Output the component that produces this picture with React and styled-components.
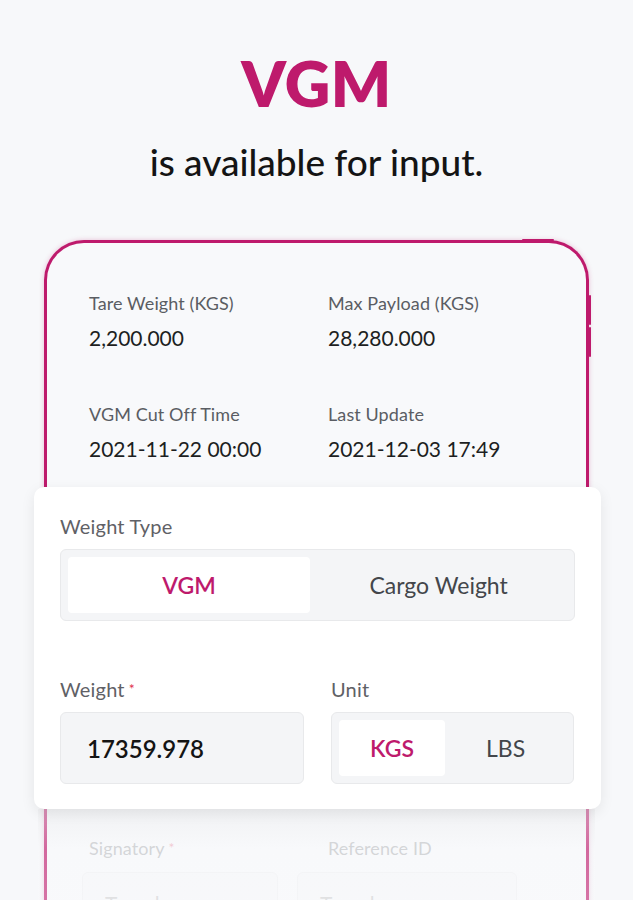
import styled, { createGlobalStyle } from "styled-components";

const magenta = "#be1a6c";

const GlobalStyle = createGlobalStyle`
  html, body {
    margin: 0;
    padding: 0;
    background: #f7f8fa;
  }
  body {
    font-family: Lato, "Open Sans", sans-serif;
    overflow: hidden;
  }
`;

const Page = styled.div`
  height: 900px;
  overflow: hidden;
  display: flex;
  flex-direction: column;
  align-items: center;
  padding-top: 48px;
  box-sizing: border-box;
`;

const Title = styled.h1`
  margin: 0;
  color: ${magenta};
  font-size: 63px;
  font-weight: 800;
  line-height: 70px;
  letter-spacing: 0.5px;
`;

const Subtitle = styled.p`
  margin: 22px 0 0;
  color: #141414;
  font-size: 37px;
  font-weight: 500;
  line-height: 44px;
`;

const Stage = styled.div`
  position: relative;
  width: 545px;
  margin-top: 56px;
  align-self: flex-start;
  margin-left: 44px;
`;

const Phone = styled.div`
  position: relative;
  height: 700px;
  border: 3px solid ${magenta};
  border-bottom: none;
  border-radius: 40px 40px 0 0;
  background: #f8f9fb;
  box-shadow: 0 0 5px rgba(190, 26, 108, 0.25);
  padding: 50px 42px 0;
  box-sizing: border-box;
`;

const SideButton = styled.span`
  position: absolute;
  right: -5px;
  top: ${(p) => p.$top}px;
  width: 2px;
  height: ${(p) => p.$h}px;
  background: ${magenta};
  border-radius: 1px;
`;

const TopBump = styled.span`
  position: absolute;
  top: -4px;
  right: 32px;
  width: 32px;
  height: 2px;
  background: ${magenta};
  border-radius: 1px;
`;

const InfoGrid = styled.div`
  display: grid;
  grid-template-columns: 239px 1fr;
  row-gap: 54px;
`;

const Info = styled.div`
  display: flex;
  flex-direction: column;
  gap: 13px;
`;

const InfoLabel = styled.span`
  font-size: 18px;
  letter-spacing: 0.1px;
  color: #5a5d63;
  line-height: 20px;
`;

const InfoValue = styled.span`
  font-size: 21px;
  color: #1d1f22;
  line-height: 24px;
`;

const LowerGrid = styled.div`
  display: grid;
  grid-template-columns: 239px 1fr;
  margin-top: 377px;
  opacity: 0.35;
`;

const LowerField = styled.div`
  display: flex;
  flex-direction: column;
  gap: 14px;
`;

const Placeholder = styled.div`
  width: ${(p) => p.$w}px;
  height: 60px;
  margin-left: ${(p) => p.$shift}px;
  border: 1px solid #e2e3e6;
  border-radius: 6px;
  background: #f5f6f8;
  box-sizing: border-box;
  padding: 18px 22px;
  font-size: 21px;
  color: #888;
`;

const Fade = styled.div`
  position: absolute;
  left: -6px;
  right: -6px;
  top: 569px;
  bottom: -10px;
  background: linear-gradient(
    to bottom,
    rgba(235, 236, 238, 0.55),
    rgba(248, 249, 251, 0.35) 40px,
    rgba(250, 250, 252, 0.45)
  );
`;

const Card = styled.div`
  position: absolute;
  left: -10px;
  top: 247px;
  width: 567px;
  height: 322px;
  box-sizing: border-box;
  background: #fff;
  border-radius: 10px;
  box-shadow: 0 4px 14px rgba(0, 0, 0, 0.08);
  padding: 28px 26px 0;
  display: flex;
  flex-direction: column;
`;

const FieldLabel = styled.div`
  font-size: 20px;
  letter-spacing: 0.2px;
  color: #5f6166;
  line-height: 22px;
  margin-bottom: 12px;
`;

const Required = styled.span`
  color: #e0304e;
  font-size: 14px;
  margin-left: 4px;
  vertical-align: top;
`;

const Segmented = styled.div`
  display: flex;
  height: 72px;
  padding: 7px;
  box-sizing: border-box;
  border: 1px solid #e8e9eb;
  border-radius: 6px;
  background: #f4f5f7;
`;

const Segment = styled.div`
  flex: ${(p) => p.$flex || 1};
  display: flex;
  align-items: center;
  justify-content: center;
  border-radius: 4px;
  background: ${(p) => (p.$active ? "#fff" : "transparent")};
  color: ${(p) => (p.$active ? magenta : "#43464b")};
  font-size: 23px;
  font-weight: ${(p) => (p.$active ? 600 : 400)};
`;

const Row = styled.div`
  display: grid;
  grid-template-columns: 244px 243px;
  column-gap: 27px;
  margin-top: 57px;
`;

const Field = styled.div`
  display: flex;
  flex-direction: column;
`;

const InputBox = styled.div`
  height: 72px;
  border: 1px solid #e8e9eb;
  border-radius: 6px;
  background: #f4f5f7;
  box-sizing: border-box;
  display: flex;
  align-items: center;
  padding-left: 26px;
  font-size: 24px;
  font-weight: 600;
  color: #141414;
`;

export default function App() {
  return (
    <>
      <GlobalStyle />
      <Page>
        <Title>VGM</Title>
        <Subtitle>is available for input.</Subtitle>
        <Stage>
          <Phone>
            <TopBump />
            <SideButton $top={52} $h={30} />
            <SideButton $top={84} $h={30} />
            <InfoGrid>
              <Info>
                <InfoLabel>Tare Weight (KGS)</InfoLabel>
                <InfoValue>2,200.000</InfoValue>
              </Info>
              <Info>
                <InfoLabel>Max Payload (KGS)</InfoLabel>
                <InfoValue>28,280.000</InfoValue>
              </Info>
              <Info>
                <InfoLabel>VGM Cut Off Time</InfoLabel>
                <InfoValue>2021-11-22 00:00</InfoValue>
              </Info>
              <Info>
                <InfoLabel>Last Update</InfoLabel>
                <InfoValue>2021-12-03 17:49</InfoValue>
              </Info>
            </InfoGrid>
            <LowerGrid>
              <LowerField>
                <InfoLabel>
                  Signatory<Required>*</Required>
                </InfoLabel>
                <Placeholder $w={196} $shift={-7}>
                  Type here
                </Placeholder>
              </LowerField>
              <LowerField>
                <InfoLabel>Reference ID</InfoLabel>
                <Placeholder $w={220} $shift={-31}>
                  Type here
                </Placeholder>
              </LowerField>
            </LowerGrid>
          </Phone>
          <Fade />
          <Card>
            <FieldLabel>Weight Type</FieldLabel>
            <Segmented>
              <Segment $active>VGM</Segment>
              <Segment $flex={1.06}>Cargo Weight</Segment>
            </Segmented>
            <Row>
              <Field>
                <FieldLabel>
                  Weight<Required>*</Required>
                </FieldLabel>
                <InputBox>17359.978</InputBox>
              </Field>
              <Field>
                <FieldLabel>Unit</FieldLabel>
                <Segmented>
                  <Segment $active>KGS</Segment>
                  <Segment $flex={1.14}>LBS</Segment>
                </Segmented>
              </Field>
            </Row>
          </Card>
        </Stage>
      </Page>
    </>
  );
}
